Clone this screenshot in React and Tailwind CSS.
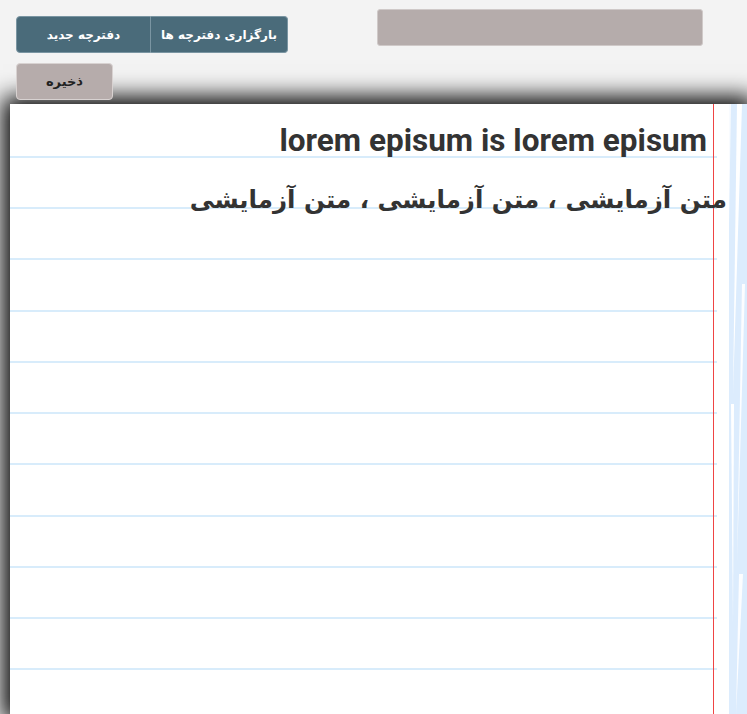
import React from 'react'

const persian = { fontFamily: '"DejaVu Sans", "Noto Sans", sans-serif' }

function Streaks() {
  return (
    <svg width="30" height="610" viewBox="0 0 30 610" className="block shrink-0">
      <rect x="12" y="0" width="18" height="610" fill="#dcecfd" />
      <polygon points="20,0 25,0 16,290" fill="#ffffff" />
      <polygon points="12,0 14,0 12,120" fill="#ffffff" opacity="0.8" />
      <polygon points="25,180 28,180 20,460" fill="#ffffff" opacity="0.9" />
      <polygon points="14,300 17,300 16,520" fill="#ffffff" />
      <polygon points="22,470 26,470 19,610" fill="#ffffff" opacity="0.9" />
    </svg>
  )
}

function Lines() {
  const rows = Array.from({ length: 12 })
  return (
    <div className="absolute inset-0 pt-[2.5px] flex flex-col overflow-hidden pointer-events-none">
      {rows.map((_, i) => (
        <div key={i} className="h-[51.26px] shrink-0 border-b-2 border-[#d8ecfb]" />
      ))}
    </div>
  )
}

export default function App() {
  return (
    <div className="min-h-screen bg-[#f3f3f3] overflow-hidden">
      <div className="h-[104px] flex">
        <div className="pl-4 pt-4 flex flex-col gap-[10px]">
          <div className="flex" style={persian}>
            <button className="w-[135px] h-[37px] bg-[#4a6b7a] text-white text-[12px] font-bold rounded-l-[4px] border border-[#7a95a2]">
              دفترچه جدید
            </button>
            <button className="w-[137px] h-[37px] bg-[#4a6b7a] text-white text-[12px] font-bold rounded-r-[4px] border border-l-0 border-[#7a95a2]">
              بارگزاری دفترچه ها
            </button>
          </div>
          <button
            style={persian}
            className="w-[97px] h-[37px] bg-[#b6acab] text-[#222] text-[13px] font-bold rounded-[4px] border border-[#d8d2d1]"
          >
            ذخیره
          </button>
        </div>
        <div className="ml-[89px] mt-[9px] w-[326px] h-[37px] bg-[#b5acab] rounded-[3px] border border-[#cfc9c8]" />
      </div>
      <div className="ml-[10px] h-[610px] bg-white flex shadow-[0_0_22px_7px_#000]">
        <div className="w-[707px] shrink-0 relative">
          <Lines />
          <div className="absolute top-0 bottom-0 left-0 w-[704px] border-r border-[#ef4444]" />
          <div className="relative w-[697px] pt-[17px] text-right text-[#333]">
            <div className="text-[31.5px] font-bold leading-[40px]" style={{ fontFamily: 'Roboto, sans-serif' }}>
              lorem episum is lorem episum
            </div>
            <div dir="rtl" className="mr-[-20px] mt-[19px] text-[24.5px] font-bold leading-[40px] text-right whitespace-nowrap" style={persian}>
              متن آزمایشی ، متن آزمایشی ، متن آزمایشی
            </div>
          </div>
        </div>
        <Streaks />
      </div>
    </div>
  )
}
